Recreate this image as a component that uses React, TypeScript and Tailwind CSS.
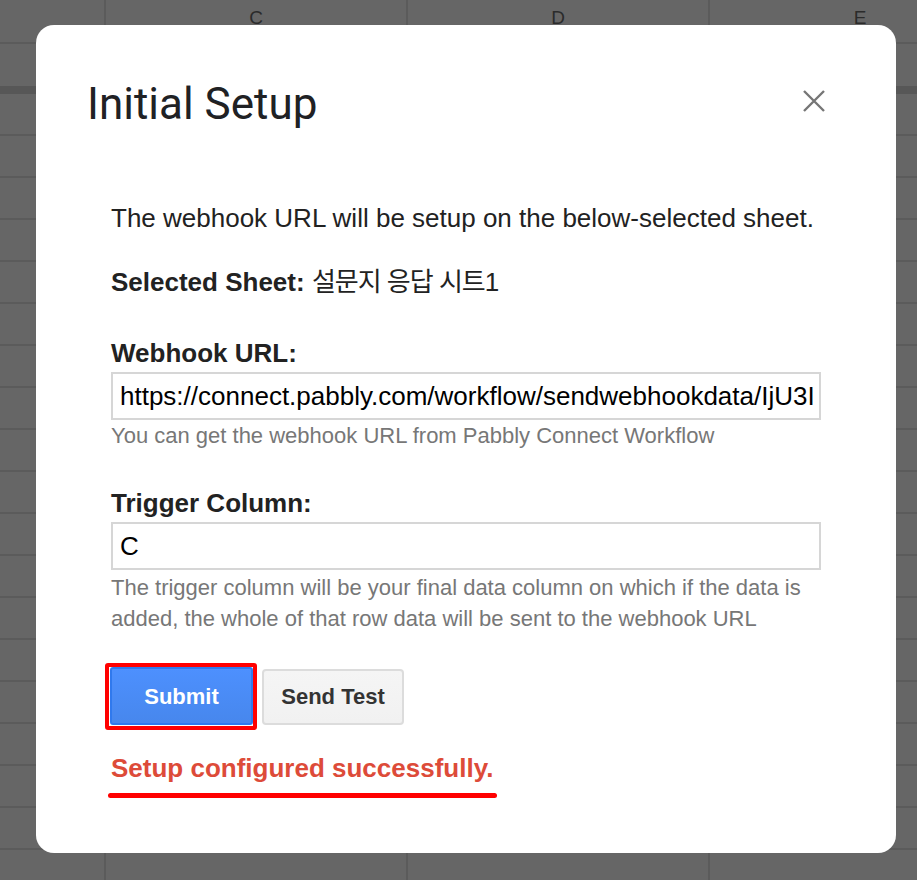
import type { ReactNode } from 'react'

const CELL_WIDTHS = ['w-[106px]', 'w-[302px]', 'w-[302px]', 'w-[302px]']
const BODY_ROWS = 19

function SheetRow({ className = '', cells = [] }: { className?: string; cells?: ReactNode[] }) {
  return (
    <div className={`flex shrink-0 ${className}`}>
      {CELL_WIDTHS.map((w, i) => (
        <div
          key={i}
          className={`${w} flex shrink-0 items-center justify-center border-r-2 border-[#5b5b5b] pb-[6px] font-['Liberation_Sans',sans-serif] text-[19px] text-[#2b2b2b]`}
        >
          {cells[i]}
        </div>
      ))}
    </div>
  )
}

function CloseIcon() {
  return (
    <svg className="mt-[12px] shrink-0" width="22" height="22" viewBox="0 0 22 22" fill="none">
      <path d="M1 1L21 21M21 1L1 21" stroke="#767676" strokeWidth="2.4" />
    </svg>
  )
}

export default function App() {
  return (
    <div className="relative h-[880px] w-[917px] overflow-hidden bg-[#666666]">
      {/* spreadsheet under the dimmed overlay */}
      <div className="flex flex-col">
        <SheetRow className="h-[44px] border-b-2 border-[#5b5b5b]" cells={[null, 'C', 'D', 'E']} />
        <SheetRow className="h-[42px]" />
        <div className="h-[8px] bg-[#575757]" />
        {Array.from({ length: BODY_ROWS }).map((_, i) => (
          <SheetRow key={i} className="h-[42px] border-b-2 border-[#5b5b5b]" />
        ))}
      </div>

      {/* dialog */}
      <div className="absolute left-[36px] top-[25px] h-[828px] w-[860px] rounded-[18px] bg-white">
        <div className="flex items-start justify-between pl-[51px] pr-[71px] pt-[53px]">
          <h1 className="font-['Roboto',sans-serif] text-[44px] leading-[52px] text-[#202124]">
            Initial Setup
          </h1>
          <CloseIcon />
        </div>

        <div className="w-[785px] pl-[75px] font-['Liberation_Sans','Noto_Sans_CJK_KR',sans-serif] text-[#222222]">
          <p className="mt-[73px] text-[26px] leading-[30px]">
            The webhook URL will be setup on the below-selected sheet.
          </p>
          <p className="mt-[34px] text-[26px] leading-[30px]">
            <b>Selected Sheet:</b> <span className="tracking-[-1px]">설문지 응답 시트1</span>
          </p>

          <label className="mt-[41px] block text-[26px] font-bold leading-[30px]">Webhook URL:</label>
          <div className="mt-[4px] h-[48px] w-[710px] overflow-hidden whitespace-nowrap border-2 border-[#d6d6d6] pl-[7px] pt-[7px] text-[26px] leading-[30px] text-black">
            https://connect.pabbly.com/workflow/sendwebhookdata/IjU3I
          </div>
          <p className="mt-[3px] text-[22px] leading-[26px] text-[#777777]">
            You can get the webhook URL from Pabbly Connect Workflow
          </p>

          <label className="mt-[39px] block text-[26px] font-bold leading-[30px]">Trigger Column:</label>
          <div className="mt-[4px] h-[48px] w-[710px] overflow-hidden whitespace-nowrap border-2 border-[#d6d6d6] pl-[7px] pt-[7px] text-[26px] leading-[30px] text-black">
            C
          </div>
          <p className="mt-[2px] w-[710px] text-[22px] leading-[31px] text-[#777777]">
            The trigger column will be your final data column on which if the data is added, the whole of that
            row data will be sent to the webhook URL
          </p>

          <div className="-ml-[6px] mt-[29px] flex items-center gap-[5px]">
            <div className="rounded-[3px] border-4 border-[#ff0000] pb-[1px] pl-[1px]">
              <button className="h-[58px] w-[143px] rounded-[3px] border-2 border-[#3079ed] bg-linear-to-b from-[#4d90fe] to-[#4787ed] text-[22px] font-bold text-white">
                Submit
              </button>
            </div>
            <button className="h-[56px] w-[142px] rounded-[4px] border-2 border-[#dcdcdc] bg-linear-to-b from-[#f5f5f5] to-[#f1f1f1] text-[22px] font-bold text-[#333333]">
              Send Test
            </button>
          </div>

          <p className="mt-[23px] text-[26px] font-bold leading-[30px] text-[#dd4b39]">
            Setup configured successfully.
          </p>
          <div className="-ml-[3px] mt-[10px] h-[5px] w-[389px] rounded-full bg-[#ff0000]" />
        </div>
      </div>
    </div>
  )
}
